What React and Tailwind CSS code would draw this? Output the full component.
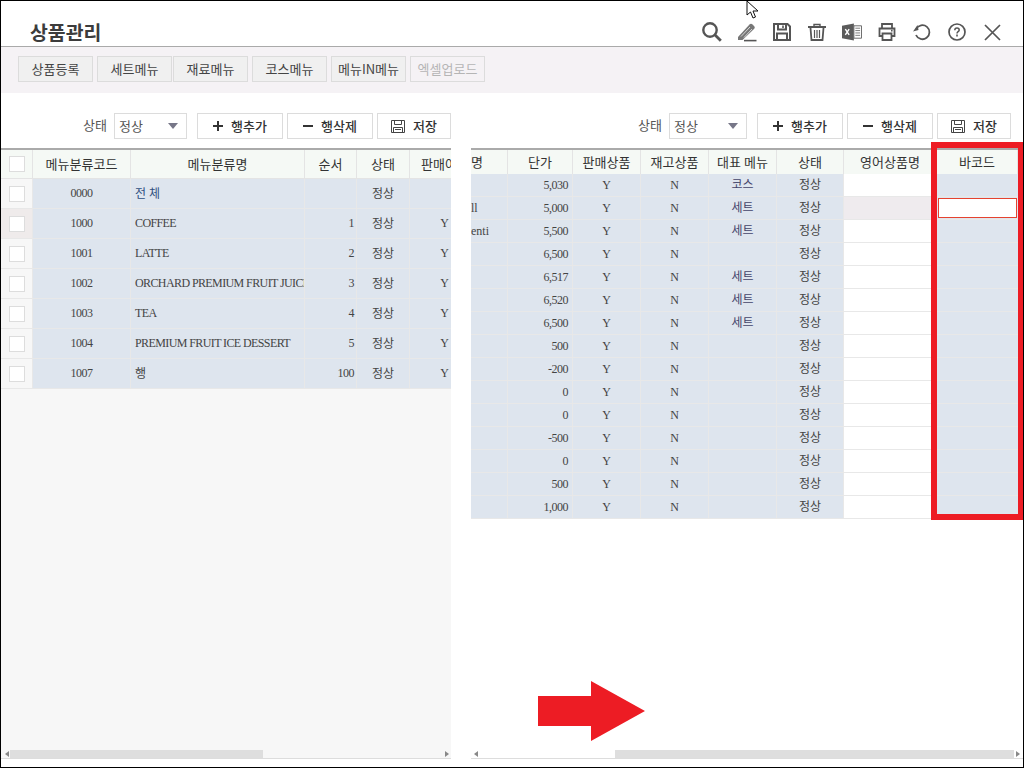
const SANS = 'font-["Noto_Sans_CJK_KR","Liberation_Sans",sans-serif]';
const CELLFONT = 'font-["Liberation_Serif","Noto_Sans_CJK_KR",serif]';

function Plus() {
  return (
    <svg width="10" height="10" viewBox="0 0 10 10" className="shrink-0">
      <path d="M5 0v10M0 5h10" stroke="#333" strokeWidth="2" />
    </svg>
  );
}
function Minus() {
  return (
    <svg width="10" height="10" viewBox="0 0 10 10" className="shrink-0">
      <path d="M0 5h10" stroke="#333" strokeWidth="2" />
    </svg>
  );
}
function SaveSmall() {
  return (
    <svg width="14" height="13" viewBox="0 0 14 13" className="shrink-0" fill="none" stroke="#444">
      <path d="M.5.5h13v12H.5z" />
      <path d="M3.5.5v4h7v-4M2.5 12.5v-5h9v5M4 9.5h6" />
    </svg>
  );
}

const hdrIcons = [
  <svg key="s" width="20" height="20" viewBox="0 0 20 20" fill="none" stroke="#555">
    <circle cx="8" cy="8" r="6.700" strokeWidth="2.400" />
    <path d="M12.800 12.800l6 6" strokeWidth="2.800" />
  </svg>,
  <svg key="p" width="20" height="20" viewBox="0 0 20 20" fill="#777">
    <path d="M1 15L12.500 2.500c1-1 2-1 3 0l1.500 1.500c1 1 1 2 0 3L5.500 18H1z" />
    <path d="M7 18.600h12.500" stroke="#555" strokeWidth="1.600" />
    <path d="M4 14.500l9-9.500M7 15.500l8-8.500" stroke="#fff" strokeWidth=".7" />
  </svg>,
  <svg key="f" width="18" height="18" viewBox="0 0 18 18" fill="none" stroke="#555">
    <path d="M1 1h13.500L17 3.500V17H1z" strokeWidth="2" />
    <path d="M5 1v5.500h8V1" strokeWidth="2" />
    <path d="M10 2.500v2.500" strokeWidth="1.600" />
    <path d="M4 17v-6.500h10V17" strokeWidth="2" />
  </svg>,
  <svg key="t" width="20" height="18" viewBox="0 0 20 18" fill="none" stroke="#555">
    <path d="M1 4h18" strokeWidth="2" />
    <path d="M7 4V1.500h6V4" strokeWidth="1.400" />
    <path d="M3.500 5l1 12h11l1-12" strokeWidth="1.800" />
    <path d="M7.500 7v8M10 7v8M12.500 7v8" strokeWidth="1.200" />
  </svg>,
  <svg key="x" width="21" height="18" viewBox="0 0 21 18">
    <path d="M0 2.500L12.500 0v18L0 15.500z" fill="#5b5b5b" />
    <path d="M3.500 6l4 6M7.500 6l-4 6" stroke="#fff" strokeWidth="1.500" />
    <path d="M12.500 2.500h8v13h-8z" fill="#fff" stroke="#666" />
    <path d="M14 5h5M14 7.500h5M14 10h5M14 12.500h5" stroke="#777" />
  </svg>,
  <svg key="pr" width="18" height="18" viewBox="0 0 18 18" fill="none" stroke="#555" strokeWidth="1.800">
    <path d="M4 5V1h10v4" />
    <path d="M4.500 13H1.500V5.500h15V13h-3" />
    <path d="M4.500 10.500h9V17h-9z" />
    <path d="M13 7.600h1.600" />
  </svg>,
  <svg key="r" width="18" height="18" viewBox="0 0 18 18" fill="none">
    <path d="M3.200 6A7 7 0 1 1 3 12" stroke="#555" strokeWidth="1.800" />
    <path d="M0 8.500l5.500-1.500L4.500 2z" fill="#555" />
  </svg>,
  <svg key="h" width="18" height="18" viewBox="0 0 18 18" fill="none" stroke="#555">
    <circle cx="9" cy="9" r="8" strokeWidth="1.700" />
    <path d="M6.800 7.200C6.800 5.800 7.800 5 9 5s2.200.8 2.200 2c0 1.600-2.200 1.800-2.200 3.400" strokeWidth="1.500" />
    <path d="M9 11.600v1.800" strokeWidth="1.600" />
  </svg>,
  <svg key="c" width="17" height="17" viewBox="0 0 17 17" fill="none" stroke="#555" strokeWidth="1.700">
    <path d="M1 1l15 15M16 1L1 16" />
  </svg>,
];

function TabBtn({ children, off = false }) {
  return (
    <div className={`w-[75px] h-[26px] shrink-0 flex items-center justify-center border border-[#dcdcdc] text-[13px] whitespace-nowrap ${off ? "bg-[#f5f2f5] text-[#b5b5b5]" : "bg-[#f0f0f0] text-[#444]"}`}>
      {children}
    </div>
  );
}

function ActBtn({ w, icon, children }) {
  return (
    <div className={`${w} h-[26px] flex items-center justify-center gap-[8px] border border-[#dcdcdc] bg-white text-[13px] font-medium text-[#333]`}>
      {icon}
      <span>{children}</span>
    </div>
  );
}

function Controls({ selW, pr }) {
  return (
    <div className={`h-[55px] pt-[20px] shrink-0 flex justify-end items-start ${pr}`}>
      <span className="h-[26px] leading-[24px] text-[13px] text-[#555] mr-[7px]">상태</span>
      <div className={`${selW} h-[26px] mr-[10px] flex items-center justify-between border border-[#dcdcdc] bg-white pl-[4px] pr-[8px] text-[13px] text-[#555]`}>
        <span>정상</span>
        <svg width="10" height="6" viewBox="0 0 10 6"><path d="M0 0h10L5 6z" fill="#777788" /></svg>
      </div>
      <div className="flex gap-[4px]">
        <ActBtn w="w-[86px]" icon={<Plus />}>행추가</ActBtn>
        <ActBtn w="w-[86px]" icon={<Minus />}>행삭제</ActBtn>
        <ActBtn w="w-[74px]" icon={<SaveSmall />}>저장</ActBtn>
      </div>
    </div>
  );
}

function Check() {
  return <div className="w-[16px] h-[16px] bg-white border border-[#dddddd]" />;
}

const leftCols = ["w-[32px]", "w-[98px]", "w-[174px]", "w-[52px]", "w-[53px]", "w-[41px]"];
const leftHead = ["", "메뉴분류코드", "메뉴분류명", "순서", "상태", "판매여부"];
const leftRows = [
  ["0000", "전 체", "", "정상", ""],
  ["1000", "COFFEE", "1", "정상", "Y"],
  ["1001", "LATTE", "2", "정상", "Y"],
  ["1002", "ORCHARD PREMIUM FRUIT JUICE", "3", "정상", "Y"],
  ["1003", "TEA", "4", "정상", "Y"],
  ["1004", "PREMIUM FRUIT ICE DESSERT", "5", "정상", "Y"],
  ["1007", "행", "100", "정상", "Y"],
];

function LeftGrid() {
  return (
    <div className="flex-1 flex flex-col bg-[#f7f7f7] mb-[8px]">
      <div className="h-[31px] flex border-t-2 border-[#aaaaaa] bg-[#f5f9f5] text-[13px] text-[#333] shrink-0 border-b border-b-[#e4e4e4]">
        {leftHead.map((h, i) => (
          <div key={i} className={`${leftCols[i]} shrink-0 flex items-center ${i === 5 ? "justify-start pl-[11px]" : "justify-center border-r border-[#e4e4e4]"} overflow-hidden whitespace-nowrap`}>
            {i === 0 ? <Check /> : h}
          </div>
        ))}
      </div>
      {leftRows.map((r, ri) => (
        <div key={ri} className={`h-[30px] flex shrink-0 border-b border-[#e8e8e8] text-[12px] text-[#444] ${CELLFONT}`}>
          <div className={`${leftCols[0]} flex items-center justify-center border-r border-[#e8e8e8] ${ri === 1 ? "bg-[#efebeb]" : "bg-[#f7f7f7]"}`}><Check /></div>
          <div className={`${leftCols[1]} flex items-center justify-center pb-[1px] tracking-[-0.5px] bg-[#dee5ee] border-r border-[#e8e8e8]`}>{r[0]}</div>
          <div className={`${leftCols[2]} flex items-center pl-[4px] bg-[#dee5ee] border-r border-[#e8e8e8] overflow-hidden whitespace-nowrap ${ri === 0 ? "text-[#2f4f7f]" : ri === 6 ? "" : "pb-[1px] tracking-[-0.6px]"}`}>{r[1]}</div>
          <div className={`${leftCols[3]} flex items-center justify-end pr-[2px] pb-[1px] tracking-[-0.5px] bg-[#dee5ee] border-r border-[#e8e8e8]`}>{r[2]}</div>
          <div className={`${leftCols[4]} flex items-center justify-center bg-[#dee5ee] border-r border-[#e8e8e8]`}>{r[3]}</div>
          <div className={`${leftCols[5]} flex items-center justify-end pr-[2px] pb-[1px] bg-[#dee5ee]`}>{r[4]}</div>
        </div>
      ))}
      <div className="mt-auto h-[9px] flex items-start pl-[4px] border-b border-[#dddddd] shrink-0">
        <span className="mt-[1px] w-0 h-0 border-y-[3px] border-y-transparent border-r-[4px] border-r-[#888888]" />
        <div className="ml-[1px] w-[253px] h-[8px] bg-[#dedede]" />
        <span className="ml-auto mr-[2px] mt-[1px] w-0 h-0 border-y-[3px] border-y-transparent border-l-[4px] border-l-[#888888]" />
      </div>
    </div>
  );
}

const rightCols = ["w-[37px]", "w-[65px]", "w-[68px]", "w-[68px]", "w-[68px]", "w-[67px]", "w-[93px]", "w-[81px]"];
const rightHead = ["명", "단가", "판매상품", "재고상품", "대표 메뉴", "상태", "영어상품명", "바코드"];
const rightRows = [
  ["", "5,030", "코스"],
  ["ll", "5,000", "세트"],
  ["enti", "5,500", "세트"],
  ["", "6,500", ""],
  ["", "6,517", "세트"],
  ["", "6,520", "세트"],
  ["", "6,500", "세트"],
  ["", "500", ""],
  ["", "-200", ""],
  ["", "0", ""],
  ["", "0", ""],
  ["", "-500", ""],
  ["", "0", ""],
  ["", "500", ""],
  ["", "1,000", ""],
];

function RightGrid() {
  return (
    <div className="flex-1 flex flex-col mb-[8px]">
      <div className="h-[26px] flex border-t-2 border-[#aaaaaa] bg-[#f5f9f5] text-[13px] text-[#333] shrink-0 pr-[5px]">
        {rightHead.map((h, i) => (
          <div key={i} className={`${rightCols[i]} shrink-0 flex items-center ${i === 0 ? "justify-start" : "justify-center"} border-r border-[#e4e4e4] whitespace-nowrap`}>
            {h}
          </div>
        ))}
      </div>
      {rightRows.map((r, ri) => (
        <div key={ri} className={`h-[23px] flex shrink-0 text-[12px] text-[#444] ${CELLFONT}`}>
          <div className={`${rightCols[0]} flex items-center pb-[1px] bg-[#dee5ee] border-b border-r border-[#e8e8e8] whitespace-nowrap overflow-hidden`}>{r[0]}</div>
          <div className={`${rightCols[1]} flex items-center justify-end pr-[4px] pb-[1px] tracking-[-0.5px] bg-[#dee5ee] border-b border-r border-[#e8e8e8]`}>{r[1]}</div>
          <div className={`${rightCols[2]} flex items-center justify-center pb-[1px] bg-[#dee5ee] border-b border-r border-[#e8e8e8]`}>Y</div>
          <div className={`${rightCols[3]} flex items-center justify-center pb-[1px] bg-[#dee5ee] border-b border-r border-[#e8e8e8]`}>N</div>
          <div className={`${rightCols[4]} flex items-center justify-center bg-[#dee5ee] border-b border-r border-[#e8e8e8] text-[#44446a]`}>{r[2]}</div>
          <div className={`${rightCols[5]} flex items-center justify-center bg-[#dee5ee] border-b border-r border-[#e8e8e8]`}>정상</div>
          <div className={`${rightCols[6]} ${ri === 1 ? "bg-[#efebee]" : "bg-white"} border-b border-r border-[#e8e8e8]`} />
          <div className={`${rightCols[7]} flex items-center justify-center bg-[#dee5ee] border-b border-[#e8e8e8]`}>
            {ri === 1 && <div className="w-[79px] h-[20px] bg-white border border-[#e5432f]" />}
          </div>
        </div>
      ))}
      <div className="mt-auto h-[9px] flex items-start pl-[3px] border-b border-[#dddddd] shrink-0">
        <span className="mt-[1px] w-0 h-0 border-y-[3px] border-y-transparent border-r-[4px] border-r-[#888888]" />
        <div className="ml-[137px] w-[399px] h-[8px] bg-[#dedede]" />
        <span className="ml-[2px] mt-[1px] w-0 h-0 border-y-[3px] border-y-transparent border-l-[4px] border-l-[#888888]" />
      </div>
    </div>
  );
}

export default function App() {
  return (
    <div className={`relative w-[1024px] h-[768px] overflow-hidden bg-white border border-black flex flex-col ${SANS}`}>
      <div className="h-[46px] shrink-0 flex items-end justify-between border-b border-[#aaaaaa] pl-[29px] pr-[21px]">
        <div className="text-[19.400px] font-bold text-[#3c3c3c] leading-[26px] mb-[1px]">상품관리</div>
        <div className="flex items-center gap-[15px] mb-[4px]">
          {hdrIcons.map((ic, i) => (
            <div key={i} className="w-[20px] h-[20px] flex items-center justify-center">{ic}</div>
          ))}
        </div>
      </div>

      <div className="h-[46px] shrink-0 bg-[#f5f2f5] pl-[17px] pt-[9px] flex items-start">
        <TabBtn>상품등록</TabBtn>
        <div className="ml-[4px]"><TabBtn>세트메뉴</TabBtn></div>
        <div className="ml-[1px]"><TabBtn>재료메뉴</TabBtn></div>
        <div className="ml-[4px]"><TabBtn>코스메뉴</TabBtn></div>
        <div className="ml-[4px]"><TabBtn>메뉴IN메뉴</TabBtn></div>
        <div className="ml-[4px]"><TabBtn off>엑셀업로드</TabBtn></div>
      </div>

      <div className="flex-1 flex min-h-0">
        <div className="w-[450px] shrink-0 flex flex-col">
          <Controls selW="w-[73px]" pr="pr-0" />
          <LeftGrid />
        </div>
        <div className="w-[20px] shrink-0" />
        <div className="flex-1 flex flex-col min-w-0">
          <Controls selW="w-[78px]" pr="pr-[12px]" />
          <RightGrid />
        </div>
      </div>

      <div className="absolute left-[930px] top-[141px] w-[93px] h-[378px] border-[6px] border-[#ed1c24]" />
      <svg className="absolute left-[537px] top-[680px]" width="108" height="60" viewBox="0 0 108 60">
        <path d="M0 15h53V0l54 30-54 30V45H0z" fill="#ed1c24" />
      </svg>
      <svg className="absolute left-[745px] top-[-1px]" width="14" height="20" viewBox="0 0 14 20">
        <path d="M1 1v14l3.500-3 2.500 6 2.500-1-2.500-6h5z" fill="#fff" stroke="#111" />
      </svg>
    </div>
  );
}
